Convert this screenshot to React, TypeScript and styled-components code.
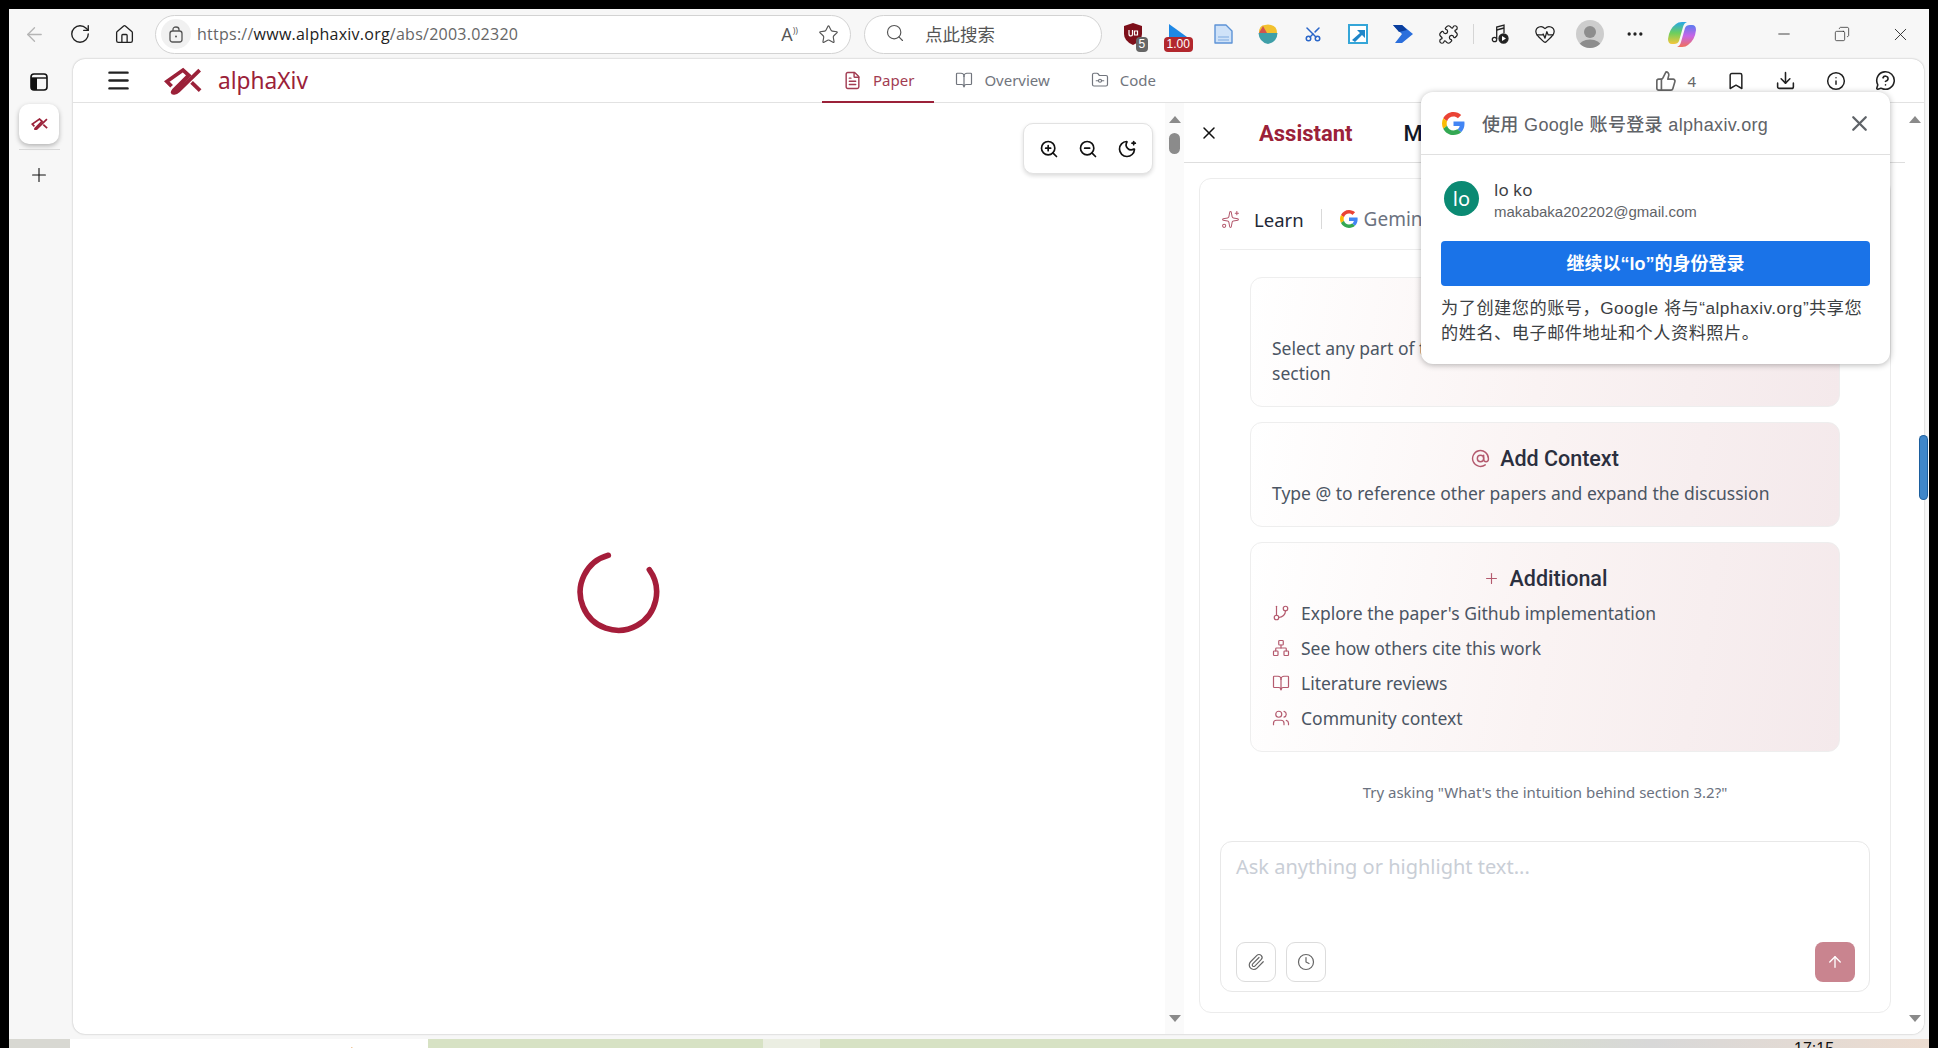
import React from 'react';
import styled, { createGlobalStyle } from 'styled-components';
import {
  ArrowLeft,
  ArrowUp,
  AtSign,
  Bookmark,
  BookOpen,
  Clock,
  Copy,
  Download,
  Ellipsis,
  FileText,
  FolderGit,
  GitBranch,
  HeartPulse,
  House,
  Info,
  Menu,
  MessageCircleQuestionMark,
  Minus,
  MoonStar,
  Network,
  Paperclip,
  Plus,
  Puzzle,
  RotateCw,
  Scissors,
  Search,
  Sparkles,
  Star,
  ThumbsUp,
  Users,
  X,
  ZoomIn,
  ZoomOut,
} from 'lucide-react';

const brand = '#9b2139';
const bodyFont = '"Noto Sans", "Noto Sans CJK SC", sans-serif';
const uiFont = '"Open Sans", "Noto Sans CJK SC", sans-serif';

const GlobalStyle = createGlobalStyle`
  html, body {
    margin: 0;
    padding: 0;
    background: #000;
  }
  * {
    box-sizing: border-box;
  }
`;

const Logo: React.FC<{ size: number }> = ({ size }) => (
  <svg width={size} height={size * 0.7} viewBox="0 0 40 28" fill="none" stroke={brand} strokeWidth="4">
    <path d="M8 19.5 L3 14.5 L20 2.5 L26 8 L10.5 23.5 Q7.5 27 11 26.5 Q13 26.5 15 24.5 L37.5 2.5" />
    <path d="M29 15.5 L38 24" />
  </svg>
);

const GoogleG: React.FC<{ size: number }> = ({ size }) => (
  <svg width={size} height={size} viewBox="0 0 48 48">
    <path fill="#EA4335" d="M24 9.5c3.54 0 6.71 1.22 9.21 3.6l6.85-6.85C35.9 2.38 30.47 0 24 0 14.62 0 6.51 5.38 2.56 13.22l7.98 6.19C12.43 13.72 17.74 9.5 24 9.5z" />
    <path fill="#4285F4" d="M46.98 24.55c0-1.57-.15-3.09-.38-4.55H24v9.02h12.94c-.58 2.96-2.26 5.48-4.78 7.18l7.73 6c4.51-4.18 7.09-10.36 7.09-17.65z" />
    <path fill="#FBBC05" d="M10.53 28.59c-.48-1.45-.76-2.99-.76-4.59s.27-3.14.76-4.59l-7.98-6.19C.92 16.46 0 20.12 0 24c0 3.88.92 7.54 2.56 10.78l7.97-6.19z" />
    <path fill="#34A853" d="M24 48c6.48 0 11.93-2.13 15.89-5.81l-7.73-6c-2.15 1.45-4.92 2.3-8.16 2.3-6.26 0-11.57-4.22-13.47-9.91l-7.98 6.19C6.51 42.62 14.62 48 24 48z" />
  </svg>
);

const Shield = () => (
  <svg width="18" height="22" viewBox="0 0 18 22">
    <path d="M9 0 L18 3 V11 Q18 18 9 22 Q0 18 0 11 V3 Z" fill="#7d0f1a" />
    <path d="M5 7 V11 Q5 13 7 13 Q8.5 13 8.5 11 V7 M10.5 8 h3 v4 h-3 z" stroke="#fff" strokeWidth="1.2" fill="none" />
  </svg>
);

const BlueWedge = () => (
  <svg width="20" height="20" viewBox="0 0 20 20">
    <path d="M1 0 L19 13 V18 H1 Z" fill="#1e88e5" />
  </svg>
);

const DocIcon = () => (
  <svg width="19" height="20" viewBox="0 0 19 20">
    <path d="M1 1 H12 L18 7 V19 H1 Z" fill="#cfe2f8" stroke="#5d93d6" strokeWidth="1.4" strokeLinejoin="round" />
    <path d="M4 13 H15 M4 16 H15" stroke="#7eaae0" strokeWidth="1.2" />
  </svg>
);

const BowlIcon = () => (
  <svg width="20" height="20" viewBox="0 0 20 20">
    <path d="M1 9 Q1 1 7 1 Q10 0 13 1 Q19 2 19 9 Z" fill="#f2c12e" />
    <path d="M1 9 L5 2 L9 9 Z" fill="#d2534f" />
    <path d="M0.5 9 H19.5 Q19 18 10 20 Q1 18 0.5 9 Z" fill="#3f9fa8" />
  </svg>
);

const ArrowSquare = () => (
  <svg width="20" height="20" viewBox="0 0 20 20">
    <rect x="1" y="1" width="18" height="18" fill="#fff" stroke="#35a6d8" strokeWidth="2" />
    <path d="M4 16 L12 9 L9 6 H17 V14 L14 11 L7 18 Z" fill="#1f86c9" />
  </svg>
);

const AutomateIcon = () => (
  <svg width="20" height="18" viewBox="0 0 20 18">
    <path d="M0 0 H9 L20 9 L9 18 H2 L9 9 Z" fill="#2b6fdc" />
    <path d="M0 0 H9 L14 5 L6 7 Z" fill="#0b3f9e" />
  </svg>
);

const MusicPlay = () => (
  <svg width="18" height="20" viewBox="0 0 18 20" fill="none" stroke="#222" strokeWidth="1.3">
    <circle cx="3.5" cy="15.5" r="2.2" />
    <path d="M5.7 15 V3 L13 1 V9" />
    <path d="M5.7 6 L13 4" />
    <circle cx="12.5" cy="14.5" r="4.5" fill="#222" />
    <path d="M11 12 L15 14.5 L11 17 Z" fill="#fff" stroke="none" />
  </svg>
);

const CopilotIcon = () => (
  <svg width="28" height="27" viewBox="0 0 28 27">
    <defs>
      <linearGradient id="copilotA" x1="0" y1="0" x2="0" y2="1">
        <stop offset="0" stopColor="#27a7e8" />
        <stop offset="0.5" stopColor="#6ccf5d" />
        <stop offset="1" stopColor="#f5c63a" />
      </linearGradient>
      <linearGradient id="copilotB" x1="0" y1="0" x2="0" y2="1">
        <stop offset="0" stopColor="#5b7bf0" />
        <stop offset="0.5" stopColor="#c765e6" />
        <stop offset="1" stopColor="#f0705a" />
      </linearGradient>
    </defs>
    <path d="M8 3 Q10 1 14 1 H19 Q16 2 15 6 L11 20 Q10 23 6 23 H4 Q0 23 0 18 Q1 8 8 3 Z" fill="url(#copilotA)" />
    <path d="M20 24 Q18 26 14 26 H9 Q12 25 13 21 L17 7 Q18 4 22 4 H24 Q28 4 28 9 Q27 19 20 24 Z" fill="url(#copilotB)" />
  </svg>
);

const LayoutIcon = () => (
  <svg width="18" height="18" viewBox="0 0 18 18">
    <rect x="1" y="1" width="16" height="16" rx="3" fill="none" stroke="#111" strokeWidth="1.6" />
    <path d="M1 5 H17" stroke="#111" strokeWidth="1.4" />
    <path d="M1 5 H7 V17 H4 Q1 17 1 14 Z" fill="#111" />
  </svg>
);

const Spinner = () => (
  <svg width="88" height="88" viewBox="0 0 88 88" fill="none">
    <path d="M33.3 7.3 A38.2 38.2 0 1 0 74.3 21.7" stroke="#a51d3a" strokeWidth="5.6" strokeLinecap="round" />
  </svg>
);

const Fox = () => (
  <svg width="20" height="9" viewBox="0 0 20 9">
    <path d="M13 0 L17 9 H1 Q8 6 13 0 Z" fill="#e08a2e" />
  </svg>
);

const Page = styled.div`
  position: relative;
  width: 1938px;
  height: 1048px;
  padding: 9px 9px 0;
  background: #000;
  overflow: hidden;
  display: flex;
  flex-direction: column;
  font-family: ${bodyFont};
`;

const Toolbar = styled.div`
  height: 50px;
  flex: none;
  padding-left: 3px;
  background: #f7f7f7;
  display: flex;
  align-items: center;
`;

const Slot = styled.div<{ $w?: number }>`
  position: relative;
  width: ${(p) => p.$w ?? 45}px;
  flex: none;
  height: 40px;
  display: flex;
  align-items: center;
  justify-content: center;
  color: ${(p) => p.color ?? '#222'};
`;

const AddressBar = styled.div`
  width: 696px;
  height: 39px;
  margin-left: 8px;
  padding: 0 11px 0 5px;
  flex: none;
  background: #fff;
  border: 1px solid #d3d3d3;
  border-radius: 20px;
  display: flex;
  align-items: center;
`;

const LockChip = styled.div`
  width: 30px;
  height: 30px;
  border-radius: 50%;
  background: #f1f1f1;
  display: flex;
  align-items: center;
  justify-content: center;
  color: #555;
`;

const Url = styled.div`
  margin-left: 6px;
  flex: 1;
  font-family: ${uiFont};
  font-size: 16px;
  letter-spacing: 0.25px;
  color: #666;
  b {
    font-weight: 400;
    color: #222;
  }
`;

const ReadAloud = styled.span`
  font-family: ${uiFont};
  font-size: 18px;
  color: #555;
  margin-right: 20px;
  sup {
    font-size: 9px;
  }
`;

const SearchBar = styled.div`
  width: 238px;
  height: 39px;
  margin-left: 13px;
  margin-right: 8.5px;
  padding: 0 0 2px 20px;
  flex: none;
  background: #fff;
  border: 1px solid #d3d3d3;
  border-radius: 20px;
  display: flex;
  align-items: center;
  gap: 20px;
  color: #555;
  font-family: "Noto Sans CJK SC", sans-serif;
  font-size: 17.5px;
`;

const ExtBadge = styled.span<{ $bg: string; $left: number }>`
  position: absolute;
  left: ${(p) => p.$left}px;
  top: 23px;
  height: 15px;
  padding: 0 3px;
  border-radius: 4px;
  background: ${(p) => p.$bg};
  color: #fff;
  font-family: "Liberation Sans", sans-serif;
  font-size: 12px;
  line-height: 15px;
`;

const BarDivider = styled.div`
  width: 1px;
  height: 20px;
  flex: none;
  margin: 0 4px 0 2px;
  background: #d5d5d5;
`;

const ProfileAvatar = styled.div`
  width: 28px;
  height: 28px;
  border-radius: 50%;
  background: #cdcdcd;
  overflow: hidden;
  display: flex;
  justify-content: center;
  align-items: flex-end;
`;

const ScissorsIcon = styled(Scissors)`
  transform: rotate(-90deg);
`;

const RestoreIcon = styled(Copy)`
  transform: scaleX(-1);
`;

const WindowControls = styled.div`
  margin-left: auto;
  display: flex;
`;

const Body = styled.div`
  flex: 1;
  min-height: 0;
  display: flex;
  background: #f7f7f7;
  padding-right: 5px;
  padding-bottom: 5px;
`;

const Rail = styled.div`
  width: 64px;
  flex: none;
  padding: 14px 4px 0 0;
  display: flex;
  flex-direction: column;
  align-items: center;
`;

const RailTile = styled.div`
  width: 40px;
  height: 40px;
  margin-top: 13px;
  border-radius: 10px;
  background: #fff;
  box-shadow: 0 2px 5px rgba(0, 0, 0, 0.28);
  display: flex;
  align-items: center;
  justify-content: center;
`;

const RailDivider = styled.div`
  width: 41px;
  height: 1px;
  margin: 5px 0 14px;
  background: #d9d9d9;
`;

const Window = styled.div`
  flex: 1;
  min-width: 0;
  display: flex;
  flex-direction: column;
  background: #fff;
  border-radius: 12px;
  box-shadow: 0 0 2px rgba(0, 0, 0, 0.3);
  overflow: hidden;
`;

const Header = styled.header`
  height: 44px;
  flex: none;
  padding-left: 32px;
  border-bottom: 1px solid #e2e2e2;
  display: flex;
  align-items: stretch;
`;

const Brand = styled.div`
  display: flex;
  align-items: center;
  margin-left: 32px;
  gap: 16px;
  width: 144px;
  color: ${brand};
  font-family: "Noto Sans", sans-serif;
  font-size: 22.7px;
`;

const HeaderMenu = styled.div`
  display: flex;
  align-items: center;
  color: #222;
`;

const Tabs = styled.nav`
  margin-left: 514px;
  display: flex;
`;

const Tab = styled.div<{ $active?: boolean }>`
  padding: 0 20px 0 21px;
  display: flex;
  align-items: center;
  gap: 11px;
  font-size: 15px;
  color: ${(p) => (p.$active ? '#a23c52' : '#71757d')};
  border-bottom: 2px solid ${(p) => (p.$active ? brand : 'transparent')};
  margin-bottom: -1px;
`;

const HeaderActions = styled.div`
  margin-left: auto;
  padding-right: 28px;
  display: flex;
  align-items: center;
  gap: 29.5px;
  color: #222;
`;

const LikeGroup = styled.div`
  display: flex;
  align-items: center;
  gap: 10px;
  font-size: 15px;
  color: #666;
`;

const Main = styled.div`
  flex: 1;
  min-height: 0;
  display: flex;
`;

const PaperPane = styled.div`
  position: relative;
  flex: 1;
  padding-top: 46px;
  display: flex;
  align-items: center;
  justify-content: center;
`;

const ZoomTools = styled.div`
  position: absolute;
  top: 20px;
  right: 12px;
  width: 130px;
  height: 51px;
  padding: 0 6px;
  background: #fff;
  border: 1px solid #e2e2e2;
  border-radius: 10px;
  box-shadow: 0 2px 4px rgba(0, 0, 0, 0.14);
  display: flex;
  align-items: center;
  justify-content: space-around;
  color: #111;
`;

const Scrollbar = styled.div<{ $bg: string }>`
  width: 19px;
  flex: none;
  padding: 13px 0 12px;
  background: ${(p) => p.$bg};
  display: flex;
  flex-direction: column;
  align-items: center;
`;

const ScrollArrow = styled.div<{ $down?: boolean }>`
  width: 0;
  height: 0;
  border-left: 6.5px solid transparent;
  border-right: 6.5px solid transparent;
  ${(p) => (p.$down ? 'border-top: 7px solid #8a8a8a; margin-top: auto;' : 'border-bottom: 7px solid #8a8a8a;')}
`;

const ScrollThumb = styled.div`
  width: 11px;
  height: 21px;
  margin-top: 10px;
  border-radius: 6px;
  background: #8b8b8b;
`;

const Panel = styled.aside`
  width: 721px;
  flex: none;
  display: flex;
  flex-direction: column;
`;

const PanelHeader = styled.div`
  height: 60px;
  flex: none;
  padding-left: 15px;
  border-bottom: 1px solid #dedede;
  display: flex;
  align-items: center;
  color: #111;
`;

const PanelTab = styled.div<{ $active?: boolean }>`
  padding-top: 2px;
  font-family: Roboto, sans-serif;
  font-size: 22px;
  font-weight: ${(p) => (p.$active ? 700 : 500)};
  color: ${(p) => (p.$active ? brand : '#111827')};
  margin-left: ${(p) => (p.$active ? 40 : 51)}px;
`;

const PanelBody = styled.div`
  flex: 1;
  min-height: 0;
  padding: 15px 14px 21px 15px;
  display: flex;
`;

const ChatCard = styled.div`
  flex: 1;
  padding: 0 20px 20px 20px;
  border: 1px solid #ececec;
  border-radius: 12px;
  display: flex;
  flex-direction: column;
`;

const ModeRow = styled.div`
  height: 71px;
  flex: none;
  padding: 10px 0 0 1px;
  border-bottom: 1px solid #ececec;
  display: flex;
  align-items: center;
`;

const ModeLabel = styled.span`
  margin-left: 14px;
  font-size: 18.5px;
  color: #1f2937;
`;

const ModeDivider = styled.span`
  width: 1px;
  height: 20px;
  margin: 0 18px 0 17px;
  background: #d9d9d9;
`;

const ModelLabel = styled.span`
  margin-left: 6px;
  font-size: 19px;
  color: #6b7280;
`;

const FeatureList = styled.div`
  margin-top: 27px;
  padding: 0 30px;
  display: flex;
  flex-direction: column;
  gap: 15px;
`;

const FeatureCard = styled.div<{ $top?: number; $bottom?: number }>`
  padding: ${(p) => p.$top ?? 20}px 21px ${(p) => p.$bottom ?? 20}px;
  border: 1px solid #eeeeee;
  border-radius: 12px;
  background: linear-gradient(100deg, #ffffff 0%, #faf3f3 50%, #f4e9eb 100%);
`;

const FeatureTitle = styled.div`
  height: 30px;
  display: flex;
  align-items: center;
  justify-content: center;
  gap: 10px;
  font-family: Roboto, sans-serif;
  font-size: 21.5px;
  font-weight: 500;
  color: #2b2f3e;
  svg {
    color: #b45a6e;
  }
`;

const FeatureText = styled.div<{ $gap?: number }>`
  margin-top: ${(p) => p.$gap ?? 0}px;
  font-size: 17.5px;
  line-height: 25px;
  color: #4b5563;
`;

const FeatureRow = styled.div`
  height: 35px;
  display: flex;
  align-items: center;
  gap: 11px;
  font-size: 17.5px;
  color: #4b5563;
  svg {
    color: #b45a6e;
  }
`;

const FeatureRows = styled.div`
  margin-top: 2px;
`;

const Hint = styled.div`
  margin-top: 30px;
  text-align: center;
  font-size: 15px;
  line-height: 20px;
  color: #6b7280;
`;

const Composer = styled.div`
  margin-top: auto;
  height: 151px;
  flex: none;
  padding: 12px 14px 9px 15px;
  border: 1px solid #e8e8e8;
  border-radius: 12px;
  display: flex;
  flex-direction: column;
`;

const Placeholder = styled.div`
  font-size: 20px;
  line-height: 25px;
  color: #c9ced6;
`;

const ComposerActions = styled.div`
  margin-top: auto;
  display: flex;
  gap: 10px;
`;

const ToolButton = styled.div`
  width: 40px;
  height: 40px;
  border: 1px solid #dcdcdc;
  border-radius: 9px;
  display: flex;
  align-items: center;
  justify-content: center;
  color: #666;
`;

const SendButton = styled.div`
  width: 40px;
  height: 40px;
  margin-left: auto;
  border-radius: 8px;
  background: #c9848f;
  color: #fff;
  display: flex;
  align-items: center;
  justify-content: center;
`;

const PageThumb = styled.div`
  position: absolute;
  left: 1920px;
  top: 436px;
  width: 7px;
  height: 63px;
  border-radius: 4px;
  background: #3f86c9;
  box-shadow: 0 0 0 1px #1d5f9e;
`;

const Popup = styled.div`
  position: absolute;
  left: 1421px;
  top: 92px;
  width: 469px;
  height: 272px;
  background: #fff;
  border-radius: 12px;
  box-shadow: 0 1px 6px rgba(0, 0, 0, 0.3);
  font-family: "Liberation Sans", "Noto Sans CJK SC", sans-serif;
`;

const PopupHeader = styled.div`
  height: 63px;
  padding: 0 18px 0 21px;
  border-bottom: 1px solid #e0e0e0;
  display: flex;
  align-items: center;
  gap: 17px;
  color: #5f6368;
  font-size: 18px;
  letter-spacing: 0.35px;
  font-weight: 500;
`;

const PopupClose = styled.div`
  margin-left: auto;
  display: flex;
  color: #5f6368;
`;

const Account = styled.div`
  height: 35px;
  margin: 26px 0 0 23px;
  display: flex;
  gap: 15px;
`;

const AccountAvatar = styled.div`
  width: 35px;
  height: 35px;
  border-radius: 50%;
  background: #0b8a73;
  color: #fff;
  font-family: "Noto Sans", sans-serif;
  font-size: 20px;
  display: flex;
  align-items: center;
  justify-content: center;
`;

const AccountText = styled.div`
  margin-top: -2px;
`;

const AccountName = styled.div`
  font-family: "Noto Sans", sans-serif;
  font-size: 17px;
  line-height: 22px;
  color: #3c4043;
`;

const AccountMail = styled.div`
  font-size: 15px;
  line-height: 22px;
  color: #5f6368;
`;

const ContinueButton = styled.div`
  width: 429px;
  height: 45px;
  margin: 25px 0 0 20px;
  padding-bottom: 3px;
  border-radius: 4px;
  background: #1a73e8;
  color: #fff;
  font-size: 18px;
  font-weight: 700;
  display: flex;
  align-items: center;
  justify-content: center;
`;

const Consent = styled.div`
  margin: 10px 19px 0 20px;
  font-size: 17.2px;
  letter-spacing: 0.5px;
  line-height: 25px;
  color: #3c4043;
`;

const Desktop = styled.div`
  height: 9px;
  flex: none;
  display: flex;
  overflow: hidden;
`;

const DesktopPart = styled.div<{ $w?: number; $bg: string }>`
  ${(p) => (p.$w ? `width: ${p.$w}px; flex: none;` : 'flex: 1;')}
  background: ${(p) => p.$bg};
`;

const DesktopWindow = styled(DesktopPart)`
  padding-left: 269px;
`;

const TrayClock = styled(DesktopPart)`
  padding-left: 974px;
  font-family: "Liberation Sans", sans-serif;
  font-size: 16px;
  line-height: 20px;
  color: #111;
`;

const ext = [
  <Slot key="doc"><DocIcon /></Slot>,
  <Slot key="bowl"><BowlIcon /></Slot>,
  <Slot key="cut" color="#2a66c9"><ScissorsIcon size={18} /></Slot>,
  <Slot key="arrow"><ArrowSquare /></Slot>,
  <Slot key="auto"><AutomateIcon /></Slot>,
  <Slot key="puzzle" color="#222"><Puzzle size={21} strokeWidth={1.4} /></Slot>,
];

const additional = [
  { icon: GitBranch, label: "Explore the paper's Github implementation" },
  { icon: Network, label: 'See how others cite this work' },
  { icon: BookOpen, label: 'Literature reviews' },
  { icon: Users, label: 'Community context' },
];

const App: React.FC = () => {
  return (
    <Page>
      <GlobalStyle />
      <Toolbar>
        <Slot color="#b5b5b5"><ArrowLeft size={23} strokeWidth={1.4} /></Slot>
        <Slot><RotateCw size={22} strokeWidth={1.5} /></Slot>
        <Slot><House size={21} strokeWidth={1.5} /></Slot>
        <AddressBar>
          <LockChip>
            <svg width="14" height="17" viewBox="0 0 14 17" fill="none" stroke="#555" strokeWidth="1.3">
              <rect x="1" y="5" width="12" height="11" rx="2.5" />
              <path d="M4 5 V3.5 Q4 1 7 1 Q10 1 10 3.5 V5" />
              <circle cx="7" cy="10.5" r="1" fill="#555" stroke="none" />
            </svg>
          </LockChip>
          <Url>https://<b>www.alphaxiv.org</b>/abs/2003.02320</Url>
          <ReadAloud>A<sup>))</sup></ReadAloud>
          <Star size={21} strokeWidth={1.3} color="#555" />
        </AddressBar>
        <SearchBar>
          <Search size={20} strokeWidth={1.4} />
          点此搜索
        </SearchBar>
        <Slot>
          <Shield />
          <ExtBadge $bg="#666" $left={25}>5</ExtBadge>
        </Slot>
        <Slot>
          <BlueWedge />
          <ExtBadge $bg="#b2272d" $left={8}>1.00</ExtBadge>
        </Slot>
        {ext}
        <BarDivider />
        <Slot><MusicPlay /></Slot>
        <Slot><HeartPulse size={22} strokeWidth={1.4} /></Slot>
        <Slot>
          <ProfileAvatar>
            <svg width="24" height="25" viewBox="0 0 24 25" fill="#8d8d8d">
              <circle cx="12" cy="9" r="6" />
              <ellipse cx="12" cy="23" rx="11" ry="6.5" />
            </svg>
          </ProfileAvatar>
        </Slot>
        <Slot><Ellipsis size={20} strokeWidth={2} /></Slot>
        <Slot $w={48}><CopilotIcon /></Slot>
        <WindowControls>
          <Slot $w={58}><Minus size={18} strokeWidth={1.1} /></Slot>
          <Slot $w={58}><RestoreIcon size={16} strokeWidth={1.1} /></Slot>
          <Slot $w={58}><X size={21} strokeWidth={1} /></Slot>
        </WindowControls>
      </Toolbar>

      <Body>
        <Rail>
          <LayoutIcon />
          <RailTile><Logo size={17} /></RailTile>
          <RailDivider />
          <Plus size={22} strokeWidth={1.2} color="#111" />
        </Rail>

        <Window>
          <Header>
            <HeaderMenu><Menu size={27} strokeWidth={2.2} /></HeaderMenu>
            <Brand>
              <Logo size={40} />
              alphaXiv
            </Brand>
            <Tabs>
              <Tab $active>
                <FileText size={19} strokeWidth={1.8} />
                Paper
              </Tab>
              <Tab>
                <BookOpen size={18} strokeWidth={1.6} />
                Overview
              </Tab>
              <Tab>
                <FolderGit size={18} strokeWidth={1.6} />
                Code
              </Tab>
            </Tabs>
            <HeaderActions>
              <LikeGroup>
                <ThumbsUp size={22} strokeWidth={1.8} />
                4
              </LikeGroup>
              <Bookmark size={20} strokeWidth={1.8} />
              <Download size={21} strokeWidth={1.8} />
              <Info size={20} strokeWidth={1.8} />
              <MessageCircleQuestionMark size={21} strokeWidth={1.8} />
            </HeaderActions>
          </Header>

          <Main>
            <PaperPane>
              <Spinner />
              <ZoomTools>
                <ZoomIn size={20} strokeWidth={2} />
                <ZoomOut size={20} strokeWidth={2} />
                <MoonStar size={20} strokeWidth={2} />
              </ZoomTools>
            </PaperPane>
            <Scrollbar $bg="#fafafa">
              <ScrollArrow />
              <ScrollThumb />
              <ScrollArrow $down />
            </Scrollbar>
            <Panel>
              <PanelHeader>
                <X size={20} strokeWidth={1.8} />
                <PanelTab $active>Assistant</PanelTab>
                <PanelTab>My Notes</PanelTab>
              </PanelHeader>
              <PanelBody>
                <ChatCard>
                  <ModeRow>
                    <Sparkles size={19} strokeWidth={1.3} color="#b45a6e" />
                    <ModeLabel>Learn</ModeLabel>
                    <ModeDivider />
                    <GoogleG size={18} />
                    <ModelLabel>Gemini</ModelLabel>
                  </ModeRow>
                  <FeatureList>
                    <FeatureCard $top={58}>
                      <FeatureText>
                        Select any part of the
                        <br />
                        section
                      </FeatureText>
                    </FeatureCard>
                    <FeatureCard>
                      <FeatureTitle>
                        <AtSign size={19} strokeWidth={1.8} />
                        Add Context
                      </FeatureTitle>
                      <FeatureText $gap={8}>Type @ to reference other papers and expand the discussion</FeatureText>
                    </FeatureCard>
                    <FeatureCard $bottom={16}>
                      <FeatureTitle>
                        <Plus size={17} strokeWidth={1.6} />
                        Additional
                      </FeatureTitle>
                      <FeatureRows>
                        {additional.map(({ icon: Icon, label }) => (
                          <FeatureRow key={label}>
                            <Icon size={18} strokeWidth={1.6} />
                            {label}
                          </FeatureRow>
                        ))}
                      </FeatureRows>
                    </FeatureCard>
                  </FeatureList>
                  <Hint>Try asking "What's the intuition behind section 3.2?"</Hint>
                  <Composer>
                    <Placeholder>Ask anything or highlight text...</Placeholder>
                    <ComposerActions>
                      <ToolButton><Paperclip size={18} strokeWidth={1.6} /></ToolButton>
                      <ToolButton><Clock size={18} strokeWidth={1.6} /></ToolButton>
                      <SendButton><ArrowUp size={18} strokeWidth={1.8} /></SendButton>
                    </ComposerActions>
                  </Composer>
                </ChatCard>
              </PanelBody>
            </Panel>
            <Scrollbar $bg="#fff">
              <ScrollArrow />
              <ScrollArrow $down />
            </Scrollbar>
          </Main>
        </Window>
      </Body>

      <Desktop>
        <DesktopPart $w={61} $bg="#d8d8d2" />
        <DesktopWindow $w={358} $bg="#fff"><Fox /></DesktopWindow>
        <DesktopPart $w={335} $bg="#d7e2c4" />
        <DesktopPart $w={57} $bg="#ebeee2" />
        <TrayClock $bg="linear-gradient(90deg, #d7e2c4 0%, #d7e2c4 50%, #d8d8d8 75%, #ecdcd0 100%)">17:15</TrayClock>
      </Desktop>

      <PageThumb />

      <Popup>
        <PopupHeader>
          <GoogleG size={23} />
          使用 Google 账号登录 alphaxiv.org
          <PopupClose><X size={25} strokeWidth={2.2} /></PopupClose>
        </PopupHeader>
        <Account>
          <AccountAvatar>lo</AccountAvatar>
          <AccountText>
            <AccountName>lo ko</AccountName>
            <AccountMail>makabaka202202@gmail.com</AccountMail>
          </AccountText>
        </Account>
        <ContinueButton>继续以“lo”的身份登录</ContinueButton>
        <Consent>为了创建您的账号，Google 将与“alphaxiv.org”共享您的姓名、电子邮件地址和个人资料照片。</Consent>
      </Popup>
    </Page>
  );
};

export default App;
